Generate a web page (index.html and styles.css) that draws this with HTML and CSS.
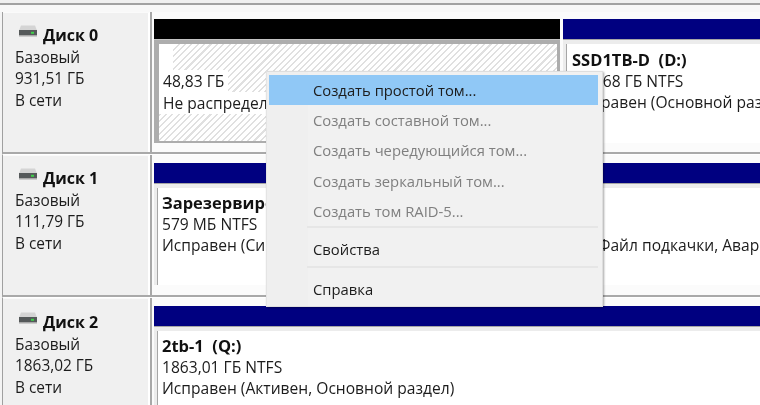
FILE: index.html
```html
<!DOCTYPE html>
<html lang="ru">
<head>
<meta charset="utf-8">
<title>Управление дисками</title>
<link rel="stylesheet" href="styles.css">
</head>
<body>
<svg class="defs" width="0" height="0" aria-hidden="true">
  <defs>
    <symbol id="hdd" viewBox="0 0 20 12">
      <path d="M3 0.5h14l2 5H1z" fill="#d4d4d4"/>
      <rect x="1" y="5" width="18" height="6" fill="#55595a"/>
      <rect x="1" y="10" width="18" height="1.5" fill="#a8a8a8"/>
      <rect x="13" y="6.8" width="3" height="2" fill="#3fd04a"/>
    </symbol>
  </defs>
</svg>
<div class="app">
  <div class="topline"></div>
  <section class="row row0">
    <div class="label">
      <div class="title"><svg class="hdd"><use href="#hdd"/></svg><b>Диск 0</b></div>
      <div>Базовый</div><div>931,51 ГБ</div><div>В сети</div>
    </div>
    <div class="vols">
      <div class="vol unalloc">
        <div class="head black"></div>
        <div class="frame selected">
          <div class="hatch">
            <div class="patch blank">&nbsp;</div>
            <div class="patch">48,83 ГБ</div>
            <div class="patch">Не распределена</div>
          </div>
        </div>
      </div>
      <div class="vol ssd">
        <div class="head navy"></div>
        <div class="frame">
          <div class="body">
            <div class="name">SSD1TB-D&nbsp; (D:)</div>
            <div>882,68 ГБ NTFS</div>
            <div>Исправен (Основной раздел)</div>
          </div>
        </div>
      </div>
    </div>
  </section>
  <section class="row row1">
    <div class="label">
      <div class="title"><svg class="hdd"><use href="#hdd"/></svg><b>Диск 1</b></div>
      <div>Базовый</div><div>111,79 ГБ</div><div>В сети</div>
    </div>
    <div class="vols">
      <div class="vol wide">
        <div class="head navy"></div>
        <div class="frame">
          <div class="body split">
            <div class="part">
              <div class="name">Зарезервировано</div>
              <div>579 МБ NTFS</div>
              <div>Исправен (Система)</div>
            </div>
            <div class="part second">
              <div>&nbsp;</div><div>&nbsp;</div>
              <div>Файл подкачки, Аварийный дамп</div>
            </div>
          </div>
        </div>
      </div>
    </div>
  </section>
  <section class="row row2">
    <div class="label">
      <div class="title"><svg class="hdd"><use href="#hdd"/></svg><b>Диск 2</b></div>
      <div>Базовый</div><div>1863,02 ГБ</div><div>В сети</div>
    </div>
    <div class="vols">
      <div class="vol wide">
        <div class="head navy"></div>
        <div class="frame">
          <div class="body">
            <div class="name">2tb-1&nbsp; (Q:)</div>
            <div>1863,01 ГБ NTFS</div>
            <div>Исправен (Активен, Основной раздел)</div>
          </div>
        </div>
      </div>
    </div>
  </section>
  <nav class="menu">
    <div class="item active">Создать простой том...</div>
    <div class="item off">Создать составной том...</div>
    <div class="item off">Создать чередующийся том...</div>
    <div class="item off">Создать зеркальный том...</div>
    <div class="item off">Создать том RAID-5...</div>
    <div class="sep"></div>
    <div class="item low">Свойства</div>
    <div class="sep"></div>
    <div class="item low">Справка</div>
  </nav>
</div>
</body>
</html>
```

FILE: styles.css
```css
* { box-sizing: border-box; }
html, body { margin: 0; height: 100%; overflow: hidden; background: #fff; }
.defs { position: absolute; }
.app {
  position: relative;
  width: 760px;
  height: 405px;
  overflow: hidden;
  background: #f4f4f4;
  font: 15.4px/21.3px "Open Sans", "Noto Sans", sans-serif;
  color: #1c1c1c;
  filter: blur(0.35px);
}
.topline { height: 12px; border-top: 3px solid #f0f0f0; background: linear-gradient(#a2a2a2 0 2px, #f8f8f8 2px); }
.row {
  display: flex;
  margin-left: 2px;
  border-left: 1px solid #a0a0a0;
  border-bottom: 2px solid #a9a9a9;
  background: #fbfbfb;
}
.row0 { height: 142px; }
.row1 { height: 143px; border-top: 1px solid #fff; }
.row2 { height: 120px; border-top: 1px solid #fff; border-bottom: 0; }
.label {
  flex: none;
  width: 147px;
  padding: 10px 0 0 12px;
  background: #f0f0f0;
  border-top: 1px solid #fafafa;
  border-right: 2px solid #fff;
  box-shadow: 2px 0 0 0 #a8a8a8;
}
.row2 .label { padding-top: 11px; }
.title { display: flex; align-items: flex-end; height: 24px; margin-left: 3px; font-size: 16px; color: #111; }
.title b { margin-left: 5px; line-height: 24px; }
.hdd { width: 20px; height: 12px; margin-bottom: 10px; }
.vols { flex: 1; display: flex; gap: 3px; padding: 7px 0 0 4px; }
.row1 .vols, .row2 .vols { padding-top: 8px; }
.vol { display: flex; flex-direction: column; min-width: 0; }
.unalloc { width: 406px; flex: none; }
.ssd, .wide { flex: 1; }
.head { flex: none; height: 20px; }
.black { background: #000; }
.navy { background: #000080; }
.frame { padding: 4px 0 0 3px; border-top: 1px solid #a6a6a6; height: 104px; background: #ececec; }
.row1 .frame { height: 102px; }
.row2 .frame { height: 90px; }
.selected { padding: 4px 3px 2px 5px; background: #adadad; border-top: 1px solid #c4c4c4; }
.hatch {
  height: 100%;
  background: repeating-linear-gradient(135deg, #e0e0e0 0 1.5px, #fff 1.5px 4.5px);
}
.patch { width: fit-content; padding-left: 4px; padding-right: 4px; background: #fff; white-space: nowrap; line-height: 22px; font-size: 15.6px; }
.blank { width: 14px; height: 26px; }
.body {
  height: 100%;
  padding: 5px 0 0 4px;
  background: #fff;
  border-left: 1px solid #a6a6a6;
  white-space: nowrap;
  overflow: hidden;
  font-size: 15.6px;
}
.ssd .body { padding-left: 5px; }
.row1 .body { padding-top: 4px; }
.row2 .body { padding-top: 4px; }
.split { display: flex; }
.part { width: 250px; flex: none; }
.second { padding-left: 186px; width: 600px; }
.name { font-weight: 700; font-size: 16.5px; color: #111; line-height: 22px; }
.menu {
  position: absolute;
  left: 266px;
  top: 71px;
  width: 337px;
  height: 236px;
  padding: 3px 4px 0 2px;
  background: linear-gradient(90deg, #efefef 0 41px, #f1f1f1 41px);
  border: 1px solid #dedede;
  border-left-color: #e4e4e4;
  box-shadow: 1px 1px 2px rgba(0, 0, 0, .35);
}
.item { height: 30.2px; padding-left: 44px; line-height: 30px; font-size: 14.8px; color: #1c1c1c; white-space: nowrap; }
.active { background: #90c8f6; }
.off { color: #7f7f7f; }
.sep { height: 2px; margin: 0 0 8px 38px; background: #e6e6e6; }
.low { line-height: 27px; }
```
